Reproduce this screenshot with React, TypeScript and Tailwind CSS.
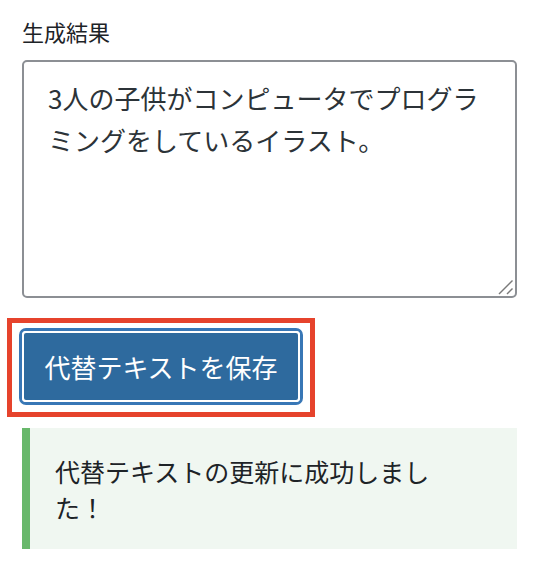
import React from "react";

const FONT = "font-['Noto_Sans_CJK_JP','Noto_Sans',sans-serif]";

export default function App() {
  return (
    <div className={`w-[540px] h-[570px] bg-white ${FONT} text-[#1d2327] pt-[15px]`}>
      <div className="pl-[22px] text-[22px] leading-[33px]">生成結果</div>
      <div className="pl-[22px] pr-[23px] mt-[12px]">
        <div className="relative w-[495px] h-[238px]">
          <textarea
            readOnly
            value="3人の子供がコンピュータでプログラミングをしているイラスト。"
            className="block w-full h-full border-2 border-[#8c8f94] rounded-[5px] pt-[15px] px-[24px] text-[26px] leading-[42px] text-[#2c3338] resize-none outline-none bg-white"
          />
          <svg
            className="absolute right-[3px] bottom-[3px] pointer-events-none"
            width="16"
            height="16"
            viewBox="0 0 16 16"
          >
            <line x1="1" y1="15" x2="14.5" y2="1.5" stroke="#7a7a7a" strokeWidth="1.4" />
            <line x1="9" y1="15" x2="14.5" y2="9.5" stroke="#7a7a7a" strokeWidth="1.4" />
          </svg>
        </div>
      </div>
      <div className="pl-[7px] mt-[20px]">
        <div className="inline-block border-[5px] border-[#e6432c] pt-[5px] px-[7px] pb-[7px]">
          <div className="rounded-[7px] border-[3px] border-[#3877b6] bg-white">
            <button className="block w-[278px] h-[71px] rounded-[4px] border-2 border-white bg-[#2e6a9e] text-white text-[26px] leading-none text-center">
              代替テキストを保存
            </button>
          </div>
        </div>
      </div>
      <div className="ml-[22px] mt-[11px] w-[495px] flex bg-[#f0f7f1]">
        <div className="w-[8px] bg-[#68b86b] shrink-0" />
        <p className="pl-[25px] pr-[70px] pt-[25px] pb-[24px] text-[25px] leading-[36px] text-[#1d2327]">
          代替テキストの更新に成功しました！
        </p>
      </div>
    </div>
  );
}
